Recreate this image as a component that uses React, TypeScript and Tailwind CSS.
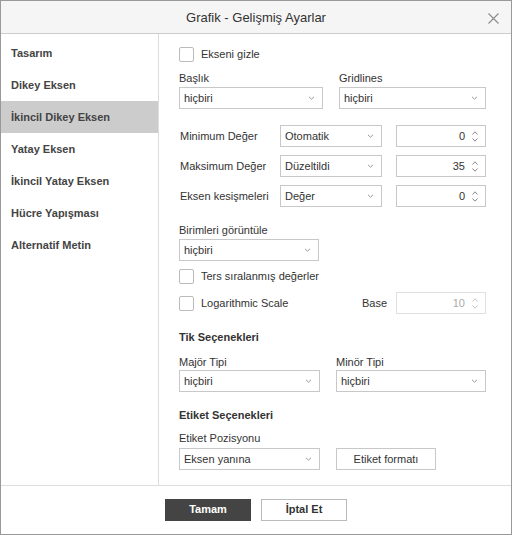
import React from 'react'

const navItems = [
  'Tasarım',
  'Dikey Eksen',
  'İkincil Dikey Eksen',
  'Yatay Eksen',
  'İkincil Yatay Eksen',
  'Hücre Yapışması',
  'Alternatif Metin',
]

function Chevron({ color = '#999' }: { color?: string }) {
  return (
    <svg width="7" height="4" viewBox="0 0 7 4" fill="none">
      <path d="M1 0.8 L3.5 3.2 L6 0.8" stroke={color} strokeWidth="1" />
    </svg>
  )
}

function Select({ value, w }: { value: string; w: string }) {
  return (
    <div className={`${w} flex h-[22px] shrink-0 items-center justify-between border border-[#c8c8c8] bg-white pl-[4px] pr-[7px] text-[11px] text-[#333]`}>
      <span>{value}</span>
      <Chevron />
    </div>
  )
}

function NumberInput({ value, disabled }: { value: string; disabled?: boolean }) {
  const c = disabled ? '#c4c4c4' : '#888'
  return (
    <div className={`flex h-[22px] w-[90px] shrink-0 items-center justify-end border bg-white pr-[7px] text-[11px] ${disabled ? 'border-[#e0e0e0] text-[#aaa]' : 'border-[#c8c8c8] text-[#333]'}`}>
      <span className="mr-[7px]">{value}</span>
      <div className="flex flex-col gap-[3px]">
        <svg width="6" height="4" viewBox="0 0 6 4" fill="none">
          <path d="M0.5 3.5 L3 0.8 L5.5 3.5" stroke={c} strokeWidth="1" />
        </svg>
        <svg width="6" height="4" viewBox="0 0 6 4" fill="none">
          <path d="M0.5 0.5 L3 3.2 L5.5 0.5" stroke={c} strokeWidth="1" />
        </svg>
      </div>
    </div>
  )
}

function Checkbox({ label }: { label: string }) {
  return (
    <div className="flex items-center">
      <div className="h-[15px] w-[15px] rounded-[2px] border border-[#bbb] bg-white" />
      <span className="ml-[7px] text-[11px] text-[#333]">{label}</span>
    </div>
  )
}

function Label({ children, className = '' }: { children: React.ReactNode; className?: string }) {
  return <div className={`h-[14px] text-[11px] leading-[14px] text-[#333] ${className}`}>{children}</div>
}

function ValueRow({ label, mode, value, className = '' }: { label: string; mode: string; value: string; className?: string }) {
  return (
    <div className={`flex h-[22px] items-center ${className}`}>
      <span className="w-[101px] shrink-0 pl-[1px] text-[11px] text-[#333]">{label}</span>
      <Select value={mode} w="w-[102px]" />
      <div className="ml-auto">
        <NumberInput value={value} />
      </div>
    </div>
  )
}

export default function App() {
  return (
    <div className="flex h-[535px] w-[512px] flex-col border border-[#999] bg-white font-['Liberation_Sans',Arial,sans-serif] text-[#333]">
      <header className="relative flex h-[33px] shrink-0 items-center justify-center border-b border-[#ccc] bg-[#f5f5f5]">
        <h1 className="pt-[2px] text-[13px] text-[#333]">Grafik - Gelişmiş Ayarlar</h1>
        <svg className="absolute right-[12px] top-[12px]" width="11" height="11" viewBox="0 0 11 11" fill="none">
          <path d="M0.5 0.5 L10.5 10.5 M10.5 0.5 L0.5 10.5" stroke="#8a8a8a" strokeWidth="1.1" />
        </svg>
      </header>

      <div className="flex h-[452px] shrink-0 border-b border-[#ddd]">
        <nav className="w-[158px] shrink-0 border-r border-[#ddd] pt-[3px]">
          {navItems.map((item, i) => (
            <div
              key={item}
              className={`flex h-[32px] items-center pl-[10px] text-[11px] font-bold text-[#444] ${i === 2 ? 'bg-[#cccccc]' : ''}`}
            >
              {item}
            </div>
          ))}
        </nav>

        <section className="flex-1 pl-[20px] pr-[25px] pt-[13px]">
          <div className="flex h-[15px] items-center">
            <Checkbox label="Ekseni gizle" />
          </div>

          <div className="mt-[9px] flex">
            <div className="w-[144px]">
              <Label>Başlık</Label>
              <div className="mt-[2px]">
                <Select value="hiçbiri" w="w-[144px]" />
              </div>
            </div>
            <div className="ml-[16px] w-[147px]">
              <Label>Gridlines</Label>
              <div className="mt-[2px]">
                <Select value="hiçbiri" w="w-[147px]" />
              </div>
            </div>
          </div>

          <ValueRow className="mt-[16px]" label="Minimum Değer" mode="Otomatik" value="0" />
          <ValueRow className="mt-[8px]" label="Maksimum Değer" mode="Düzeltildi" value="35" />
          <ValueRow className="mt-[8px]" label="Eksen kesişmeleri" mode="Değer" value="0" />

          <Label className="mt-[16px]">Birimleri görüntüle</Label>
          <div className="mt-[2px]">
            <Select value="hiçbiri" w="w-[140px]" />
          </div>

          <div className="mt-[8px] flex h-[15px] items-center">
            <Checkbox label="Ters sıralanmış değerler" />
          </div>

          <div className="mt-[8px] flex h-[22px] items-center">
            <Checkbox label="Logarithmic Scale" />
            <span className="ml-auto mr-[9px] text-[11px] text-[#333]">Base</span>
            <NumberInput value="10" disabled />
          </div>

          <Label className="mt-[16px] font-bold">Tik Seçenekleri</Label>

          <div className="mt-[11px] flex">
            <div>
              <Label>Majör Tipi</Label>
              <div className="mt-[1px]">
                <Select value="hiçbiri" w="w-[141px]" />
              </div>
            </div>
            <div className="ml-[16px]">
              <Label>Minör Tipi</Label>
              <div className="mt-[1px]">
                <Select value="hiçbiri" w="w-[150px]" />
              </div>
            </div>
          </div>

          <Label className="mt-[16px] font-bold">Etiket Seçenekleri</Label>
          <Label className="mt-[9px]">Etiket Pozisyonu</Label>
          <div className="mt-[3px] flex items-center">
            <Select value="Eksen yanına" w="w-[141px]" />
            <button className="ml-[16px] h-[22px] w-[100px] border border-[#c8c8c8] bg-white text-[11px] text-[#333]">
              Etiket formatı
            </button>
          </div>
        </section>
      </div>

      <footer className="flex flex-1 items-center justify-center gap-[10px] pb-[1px]">
        <button className="h-[22px] w-[86px] bg-[#444] text-[11px] font-bold text-white">Tamam</button>
        <button className="h-[22px] w-[86px] border border-[#bbb] bg-white text-[11px] font-bold text-[#333]">İptal Et</button>
      </footer>
    </div>
  )
}
